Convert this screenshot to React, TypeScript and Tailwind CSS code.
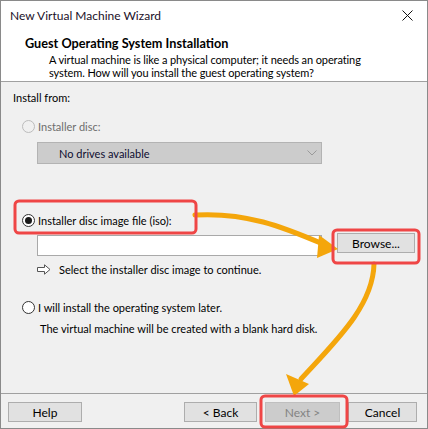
import React from 'react';

const font = { fontFamily: 'Lato, "Noto Sans", sans-serif' };

function Radio({ checked = false, disabled = false }: { checked?: boolean; disabled?: boolean }) {
  return (
    <span
      className={
        'flex h-[13px] w-[13px] shrink-0 items-center justify-center rounded-full border ' +
        (disabled ? 'border-[#bcbcbc] bg-[#f0f0f0]' : 'border-[#333333] bg-white')
      }
    >
      {checked && <span className="h-[7px] w-[7px] rounded-full bg-[#1a1a1a]" />}
    </span>
  );
}

function Btn({ label, w, disabled = false }: { label: string; w: string; disabled?: boolean }) {
  return (
    <div
      className={
        'flex h-[20px] items-center justify-center border text-[12px] ' +
        w +
        (disabled
          ? ' border-[#bfbfbf] bg-[#cccccc] text-[#838383]'
          : ' border-[#adadad] bg-[#e1e1e1] text-black')
      }
    >
      {label}
    </div>
  );
}

function Overlay() {
  return (
    <svg className="pointer-events-none absolute left-0 top-0" width="428" height="429">
      <g fill="none" stroke="#f4a60b" strokeWidth="5" strokeLinecap="round">
        <path d="M 194 214 C 245 211, 282 226, 322 243" />
        <path d="M 373 263 C 372 305, 335 340, 300 378" />
      </g>
      <g fill="#f4a60b">
        <polygon points="337,248 318,234 316,257" />
        <polygon points="293,395 285,373 308,383" />
      </g>
      <g fill="none" stroke="#ef4646" strokeWidth="3">
        <rect x="14" y="200" width="181" height="32" rx="4" />
        <rect x="332" y="229" width="86" height="33" rx="4" />
        <rect x="260" y="395" width="86" height="31" rx="4" />
      </g>
    </svg>
  );
}

export default function App() {
  return (
    <div className="h-[429px] w-[428px] bg-white" style={font}>
      <div className="relative flex h-[429px] w-[428px] flex-col border border-[#8a8a8a] text-[11px] leading-[15px] text-black">
        {/* title bar */}
        <div className="flex h-[29px] shrink-0 items-center justify-between bg-white pl-[9px] pr-[14px] text-[12px]">
          <span className="text-[#1b1028]">New Virtual Machine Wizard</span>
          <svg width="11" height="11" viewBox="0 0 11 11">
            <path d="M0.5 0.5 L10.5 10.5 M10.5 0.5 L0.5 10.5" stroke="#111" strokeWidth="1" />
          </svg>
        </div>

        {/* header */}
        <div className="flex h-[52px] shrink-0 flex-col border-b border-[#a0a0a0] bg-white pl-[24px] pt-[5px]">
          <div className="text-[12.7px] font-bold leading-[16px]">Guest Operating System Installation</div>
          <div className="mt-[2px] pl-[24px] text-[11px] leading-[13px] tracking-[-0.1px]">
            A virtual machine is like a physical computer; it needs an operating
            <br />
            system. How will you install the guest operating system?
          </div>
        </div>

        {/* body */}
        <div className="flex flex-1 flex-col bg-[#f0f0f0] pl-[12px] pt-[8px]">
          <div>Install from:</div>

          <div className="mt-[14px] flex items-center gap-[3px] pl-[9px]">
            <Radio disabled />
            <span className="text-[#6d6d6d]">Installer disc:</span>
          </div>

          <div className="ml-[24px] mt-[8px] flex h-[22px] w-[285px] items-center justify-between border border-[#b3b3b3] bg-[#cccccc] pl-[21px] pr-[4px] text-[#0c0c30]">
            <span>No drives available</span>
            <svg width="10" height="6" viewBox="0 0 10 6">
              <path d="M0.5 0.5 L5 5 L9.5 0.5" fill="none" stroke="#9a9a9a" strokeWidth="1" />
            </svg>
          </div>

          <div className="mt-[49px] flex items-center gap-[3px] pl-[9px]">
            <Radio checked />
            <span>Installer disc image file (iso):</span>
          </div>

          <div className="ml-[24px] mt-[5px] flex items-start gap-[15px]">
            <div className="mt-[2px] h-[21px] w-[285px] border border-[#a9a9a9] bg-white" />
            <div className="flex h-[20px] w-[78px] items-center justify-center border border-[#adadad] bg-[#e1e1e1] text-[12px]">
              Browse...
            </div>
          </div>

          <div className="ml-[24px] mt-[6px] flex items-center gap-[8px]">
            <svg width="14" height="11" viewBox="0 0 14 11">
              <path
                d="M0.5 3.5 H7.5 V0.8 L13 5.5 L7.5 10.2 V7.5 H0.5 Z"
                fill="#fff"
                stroke="#555"
                strokeWidth="1"
                strokeLinejoin="miter"
              />
            </svg>
            <span>Select the installer disc image to continue.</span>
          </div>

          <div className="mt-[23px] flex items-center gap-[3px] pl-[9px]">
            <Radio />
            <span>I will install the operating system later.</span>
          </div>

          <div className="ml-[27px] mt-[6px]">The virtual machine will be created with a blank hard disk.</div>
        </div>

        {/* footer */}
        <div className="flex h-[35px] shrink-0 items-start border-t border-[#a0a0a0] bg-[#f0f0f0] pl-[7px] pt-[8px]">
          <Btn label="Help" w="w-[74px]" />
          <div className="ml-[102px] flex gap-[8px]">
            <Btn label="< Back" w="w-[73px]" />
            <Btn label="Next >" w="w-[75px]" disabled />
            <Btn label="Cancel" w="w-[69px]" />
          </div>
        </div>

        <Overlay />
      </div>
    </div>
  );
}
